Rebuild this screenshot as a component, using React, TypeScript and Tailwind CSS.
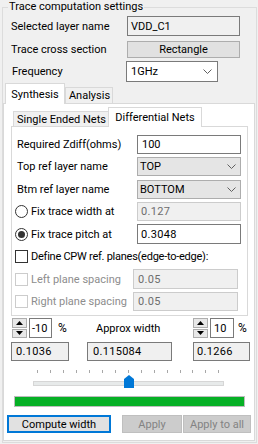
import React from "react";

function Chevron() {
  return (
    <svg width="9" height="5" viewBox="0 0 9 5" className="shrink-0">
      <path d="M0.5 0.5 L4.5 4.5 L8.5 0.5" fill="none" stroke="#606060" strokeWidth="1" />
    </svg>
  );
}

function Radio({ checked }: { checked?: boolean }) {
  return (
    <span className="w-[13px] h-[13px] shrink-0 rounded-full border border-[#333333] bg-white flex items-center justify-center">
      {checked && <span className="w-[7px] h-[7px] rounded-full bg-[#333333]" />}
    </span>
  );
}

function Check({ disabled }: { disabled?: boolean }) {
  return (
    <span
      className={`w-[13px] h-[13px] shrink-0 border bg-white ${
        disabled ? "border-[#cccccc]" : "border-[#333333]"
      }`}
    />
  );
}

function Spinner() {
  return (
    <div className="w-[15px] h-[20px] flex flex-col gap-[1px]">
      <div className="flex-1 flex items-center justify-center border border-[#adadad] bg-[#e8e8e8]">
        <svg width="7" height="4" viewBox="0 0 7 4">
          <path d="M0 4 L3.5 0 L7 4 Z" fill="#000" />
        </svg>
      </div>
      <div className="flex-1 flex items-center justify-center border border-[#adadad] bg-[#e8e8e8]">
        <svg width="7" height="4" viewBox="0 0 7 4">
          <path d="M0 0 L3.5 4 L7 0 Z" fill="#000" />
        </svg>
      </div>
    </div>
  );
}

const ticks = Array.from({ length: 15 }, (_, i) => Math.round(33.3 + i * 12.93) + 0.5);

export default function App() {
  return (
    <div className="w-[258px] h-[444px] bg-[#f0f0f0] overflow-hidden pt-[7px] pl-[2px] font-['Roboto',sans-serif] text-[11px] text-black leading-none">
      <div className="relative w-[255px] h-[436px] border border-[#dcdcdc]">
        <span className="absolute left-[5px] top-[-8px] h-[14px] px-[1px] bg-[#f0f0f0] leading-[14px]">
          Trace computation settings
        </span>

        <div className="pl-[8px]">
          <div className="mt-[8px] flex items-center h-[20px]">
            <span className="w-[116px]">Selected layer name</span>
            <div className="w-[113px] h-[20px] border border-[#7a7a7a] bg-[#f0f0f0] flex items-center pl-[3px]">
              VDD_C1
            </div>
          </div>
          <div className="mt-[5px] flex items-center h-[17px]">
            <span className="w-[116px]">Trace cross section</span>
            <div className="w-[113px] h-[17px] border border-[#adadad] bg-[#e1e1e1] flex items-center justify-center">
              Rectangle
            </div>
          </div>
          <div className="mt-[3px] flex items-center h-[21px]">
            <span className="w-[115px] pl-[1px]">Frequency</span>
            <div className="w-[92px] h-[21px] border border-[#7a7a7a] bg-white flex items-center justify-between pl-[4px] pr-[5px]">
              <span>1GHz</span>
              <Chevron />
            </div>
          </div>
        </div>

        {/* outer tabs */}
        <div className="mt-[1px] h-[21px] flex items-start pl-[2px]">
          <div className="relative z-10 w-[60px] h-[21px] border-t border-l border-r border-[#d9d9d9] bg-white flex items-center justify-center">
            Synthesis
          </div>
          <div className="mt-[4px] w-[48px] h-[17px] border border-[#d9d9d9] bg-[#f0f0f0] flex items-center justify-center pl-[1px]">
            Analysis
          </div>
        </div>

        <div className="w-[252px] h-[338px] -mt-[1px] border border-[#d9d9d9] bg-white">
          {/* inner tabs */}
          <div className="mt-[3px] h-[20px] flex items-start pl-[9px]">
            <div className="mt-[4px] w-[97px] h-[16px] border border-[#d9d9d9] bg-[#f0f0f0] flex items-center justify-center">
              Single Ended Nets
            </div>
            <div className="relative z-10 -ml-[2px] w-[94px] h-[20px] border-t border-l border-r border-[#d9d9d9] bg-white flex items-center justify-center">
              Differential Nets
            </div>
          </div>

          <div className="-mt-[1px] ml-[7px] w-[237px] h-[190px] border border-[#d9d9d9] bg-white pt-[6px] pl-[5px]">
            <div className="h-[22px] flex items-center">
              <span className="w-[120px]">Required Zdiff(ohms)</span>
              <div className="w-[104px] h-[19px] border border-[#7a7a7a] bg-white flex items-center pl-[4px]">100</div>
            </div>
            <div className="h-[23px] flex items-center">
              <span className="w-[120px]">Top ref layer name</span>
              <div className="w-[104px] h-[19px] border border-[#adadad] bg-[#e5e5e5] flex items-center justify-between pl-[2px] pr-[4px]">
                <span>TOP</span>
                <Chevron />
              </div>
            </div>
            <div className="h-[22px] flex items-center">
              <span className="w-[120px]">Btm ref layer name</span>
              <div className="w-[104px] h-[19px] border border-[#adadad] bg-[#e5e5e5] flex items-center justify-between pl-[2px] pr-[4px]">
                <span>BOTTOM</span>
                <Chevron />
              </div>
            </div>
            <div className="h-[23px] flex items-center">
              <div className="w-[120px] -ml-[2px] flex items-center gap-[3px]">
                <Radio />
                <span>Fix trace width at</span>
              </div>
              <div className="ml-[2px] w-[104px] h-[19px] border border-[#cccccc] bg-[#f0f0f0] text-[#6d6d6d] flex items-center pl-[3px] tracking-[0.3px]">
                0.127
              </div>
            </div>
            <div className="h-[22px] flex items-center">
              <div className="w-[120px] -ml-[2px] flex items-center gap-[3px]">
                <Radio checked />
                <span>Fix trace pitch at</span>
              </div>
              <div className="ml-[2px] w-[104px] h-[20px] border border-[#7a7a7a] bg-white flex items-center pl-[3px] tracking-[0.3px]">
                0.3048
              </div>
            </div>
            <div className="h-[23px] flex items-center -ml-[2px] gap-[3px]">
              <Check />
              <span className="tracking-[-0.25px]">Define CPW ref. planes(edge-to-edge):</span>
            </div>
            <div className="h-[22px] flex items-center">
              <div className="w-[118px] -ml-[2px] flex items-center gap-[3px] text-[#8d8d8d]">
                <Check disabled />
                <span>Left plane spacing</span>
              </div>
              <div className="w-[105px] h-[20px] border border-[#cccccc] bg-[#f0f0f0] text-[#6d6d6d] flex items-center pl-[4px] tracking-[0.3px]">
                0.05
              </div>
            </div>
            <div className="h-[22px] flex items-center">
              <div className="w-[118px] -ml-[2px] flex items-center gap-[3px] text-[#8d8d8d]">
                <Check disabled />
                <span>Right plane spacing</span>
              </div>
              <div className="w-[105px] h-[19px] border border-[#cccccc] bg-[#f0f0f0] text-[#6d6d6d] flex items-center pl-[4px] tracking-[0.3px]">
                0.05
              </div>
            </div>
          </div>

          {/* tolerance row */}
          <div className="mt-[2px] h-[20px] flex items-center pl-[7px]">
            <div className="w-[76px] flex items-center pl-[1px]">
              <Spinner />
              <div className="ml-[2px] w-[23px] h-[20px] border border-[#7a7a7a] bg-white flex items-center pl-[2px]">-10</div>
              <span className="ml-[6px] text-[12px]">%</span>
            </div>
            <div className="w-[106px] pl-[9px]">Approx width</div>
            <div className="flex items-center">
              <Spinner />
              <div className="ml-[2px] w-[24px] h-[20px] border border-[#7a7a7a] bg-white flex items-center pl-[3px]">10</div>
              <span className="ml-[4px] text-[12px]">%</span>
            </div>
          </div>

          <div className="mt-[4px] h-[19px] flex items-center pl-[7px] tracking-[0.3px]">
            <div className="w-[58px] h-[19px] border border-[#7a7a7a] bg-[#f0f0f0] flex items-center pl-[4px]">0.1036</div>
            <div className="ml-[18px] w-[85px] h-[19px] border border-[#7a7a7a] bg-[#f0f0f0] flex items-center pl-[5px]">0.115084</div>
            <div className="ml-[21px] w-[57px] h-[19px] border border-[#7a7a7a] bg-[#f0f0f0] flex items-center pl-[3px]">0.1266</div>
          </div>

          {/* slider */}
          <svg width="248" height="22" viewBox="0 0 248 22" className="block mt-[7px]">
            {ticks.map((x) => (
              <line key={x} x1={x} y1="2" x2={x} y2="5" stroke="#a8a8a8" strokeWidth="1" />
            ))}
            <rect x="29.5" y="13.5" width="190" height="4" fill="#e7eaea" stroke="#d6d6d6" />
            <path d="M120 11 L125 7 L130 11 L130 20 L120 20 Z" fill="#0078d7" />
          </svg>

          <div className="mt-[6px] ml-[10px] w-[231px] h-[11px] border border-[#bcbcbc] bg-[#06b025]" />

          <div className="mt-[8px] flex items-center">
            <div className="ml-[3px] w-[104px] h-[18px] border-2 border-[#0078d7] bg-[#e1e1e1] flex items-center justify-center">
              Compute width
            </div>
            <div className="ml-[11px] w-[60px] h-[18px] border border-[#bfbfbf] bg-[#cccccc] text-[#838383] flex items-center justify-center">
              Apply
            </div>
            <div className="ml-[1px] w-[68px] h-[18px] border border-[#bfbfbf] bg-[#cccccc] text-[#838383] flex items-center justify-center">
              Apply to all
            </div>
          </div>
        </div>
      </div>
    </div>
  );
}
